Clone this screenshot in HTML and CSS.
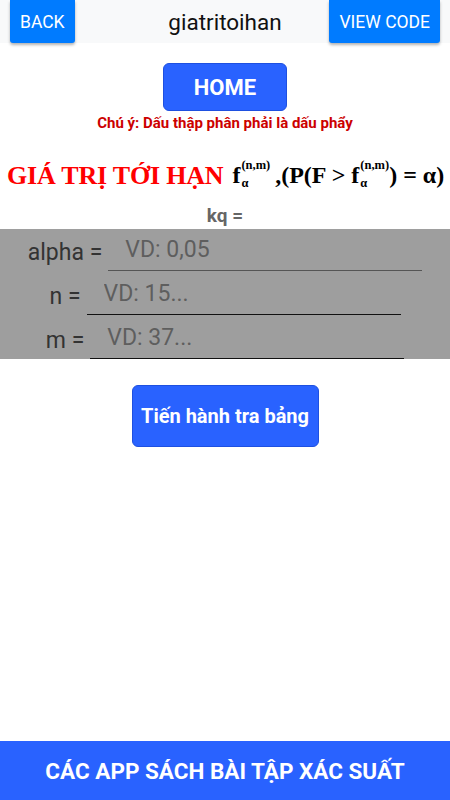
FILE: index.html
```html
<!DOCTYPE html>
<html>
<head>
    <meta charset="utf-8">
    <meta name="viewport" content="width=device-width, initial-scale=1">
    <title>giatritoihan</title>
    <link rel="stylesheet" href="styles.css">
</head>

<body>
    <header class="topbar">
        <button class="top-btn back">BACK</button>
        <div class="title">giatritoihan</div>
        <button class="top-btn code">VIEW CODE</button>
    </header>

    <div class="home-wrap">
        <button class="home-btn">HOME</button>
    </div>

    <p class="note">Chú ý: Dấu thập phân phải là dấu phẩy</p>

    <div class="formula">
        <span class="red">GIÁ TRỊ TỚI HẠN</span>
        <span class="fa">f<span class="stack"><span class="sup">(n,m)</span><span class="sub">α</span></span></span>
        <span class="rest">,(P(F &gt; f<span class="stack"><span class="sup">(n,m)</span><span class="sub">α</span></span>) = α)</span>
    </div>

    <div class="kq">kq =</div>

    <section class="panel">
        <div class="row">
            <label>alpha =</label>
            <input type="text" placeholder="VD: 0,05">
        </div>
        <div class="row">
            <label>n =</label>
            <input type="text" placeholder="VD: 15..." class="dark">
        </div>
        <div class="row">
            <label>m =</label>
            <input type="text" placeholder="VD: 37..." class="dark">
        </div>
    </section>

    <div class="go-wrap">
        <button class="go-btn">Tiến hành tra bảng</button>
    </div>

    <footer class="bottom">CÁC APP SÁCH BÀI TẬP XÁC SUẤT</footer>
</body>
</html>
```

FILE: styles.css
```css
body{
    margin: 0;
    padding: 0;
    height: 800px;
    overflow: hidden;
    background: #fff;
    font-family: Roboto, "Noto Sans", sans-serif;
    position: relative;}

.topbar{
    height: 43px;
    background: #f8f9fa;
    display: grid;
    grid-template-columns: 1fr auto 1fr;
    padding: 0 10px;}

.top-btn{
    background: #007bff;
    color: #fff;
    border: none;
    border-radius: 0 0 3px 3px;
    font-family: Roboto, sans-serif;
    font-size: 17.5px;
    padding: 0 10px;
    box-shadow: 0 2px 3px rgba(0,0,0,0.3);}

.top-btn.back{ justify-self: start;}
.top-btn.code{ justify-self: end;}

.title{
    align-self: center;
    font-size: 22.5px;
    color: #111;}

.home-wrap{
    display: flex;
    justify-content: center;
    padding-top: 20px;}

.home-btn{
    width: 124px;
    height: 48px;
    background: #2962ff;
    color: #fff;
    border: 1px solid #1e50e0;
    border-radius: 6px;
    font-family: Roboto, sans-serif;
    font-weight: bold;
    font-size: 22px;}

.note{
    margin: 3px 0 0;
    text-align: center;
    color: #cc0000;
    font-weight: bold;
    font-size: 15px;}

.formula{
    margin-top: 22px;
    padding-left: 7px;
    height: 44px;
    display: flex;
    align-items: center;
    white-space: nowrap;
    font-family: "Liberation Serif", serif;
    font-weight: bold;}

.formula .red{
    color: #ff0000;
    font-size: 26px;
    letter-spacing: -0.2px;
    margin-right: 9px;}

.formula .fa, .formula .rest{
    font-size: 24px;
    color: #000;}

.formula .fa{ margin-right: 5px;}

.stack{
    display: inline-flex;
    flex-direction: column;
    vertical-align: middle;
    line-height: 1;
    margin-left: 1px;}

.sup{
    font-size: 12.5px;
    position: relative;
    top: -6px;}

.sub{
    font-size: 12.5px;
    position: relative;
    top: 0px;}

.kq{
    text-align: center;
    color: #666;
    font-weight: bold;
    font-size: 19px;
    margin-top: 6px;
    height: 25px;}

.panel{
    background: #9e9e9e;
    height: 130px;}

.row{
    display: flex;
    justify-content: center;
    align-items: flex-end;
    height: 44px;}

.row label{
    font-size: 23px;
    color: #333;
    padding-bottom: 7px;
    margin-right: 6px;}

.row input{
    width: 314px;
    height: 40px;
    margin-bottom: 2px;
    border: none;
    border-bottom: 1px solid #555;
    background: transparent;
    font-family: Roboto, sans-serif;
    font-size: 23px;
    padding: 0 0 3px 17px;
    box-sizing: border-box;
    outline: none;}

.row input.dark{ border-bottom-color: #111;}

.row input::placeholder{ color: #5e5e5e;}

.go-wrap{
    display: flex;
    justify-content: center;
    padding-top: 26px;}

.go-btn{
    width: 187px;
    height: 62px;
    background: #2962ff;
    color: #fff;
    border: 1px solid #1e50e0;
    border-radius: 6px;
    font-family: Roboto, sans-serif;
    font-weight: bold;
    font-size: 20px;}

.bottom{
    position: absolute;
    left: 0;
    right: 0;
    bottom: 0;
    height: 59px;
    background: #2962ff;
    color: #fff;
    font-weight: bold;
    font-size: 22.5px;
    display: flex;
    align-items: center;
    justify-content: center;}
```
